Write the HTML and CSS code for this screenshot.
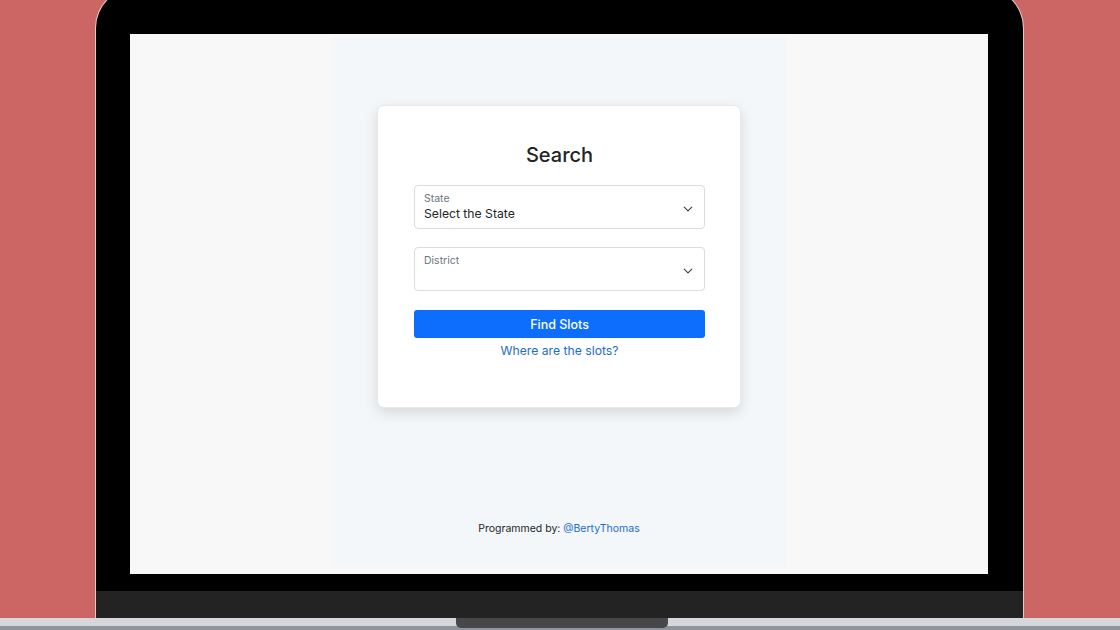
FILE: index.html
```html
<!DOCTYPE html>
<html>
<head>
<meta charset="utf-8">
<link rel="stylesheet" href="styles.css">
</head>
<body>
<div class="stage">
  <div class="lid">
    <div class="bezel">
      <div class="screen">
        <div class="column">
          <div class="card">
            <h1 class="title">Search</h1>
            <div class="select">
              <div class="select-text">
                <span class="select-label">State</span>
                <span class="select-value">Select the State</span>
              </div>
              <svg class="chev" width="10" height="6" viewBox="0 0 10 6"><path d="M1.2 1.2l3.8 3.6 3.8-3.6" fill="none" stroke="#343a40" stroke-width="1.1" stroke-linecap="round" stroke-linejoin="round"/></svg>
            </div>
            <div class="select">
              <div class="select-text">
                <span class="select-label">District</span>
                <span class="select-value">&nbsp;</span>
              </div>
              <svg class="chev" width="10" height="6" viewBox="0 0 10 6"><path d="M1.2 1.2l3.8 3.6 3.8-3.6" fill="none" stroke="#343a40" stroke-width="1.1" stroke-linecap="round" stroke-linejoin="round"/></svg>
            </div>
            <button class="btn">Find Slots</button>
            <a class="where">Where are the slots?</a>
          </div>
          <div class="footer">Programmed by: <a class="handle">@BertyThomas</a></div>
        </div>
      </div>
    </div>
    <div class="hinge"></div>
  </div>
  <div class="base"><div class="notch"></div></div>
</div>
</body>
</html>
```
FILE: styles.css
```css
html, body {
  margin: 0;
  padding: 0;
}
body {
  font-family: Inter, "Noto Sans", "Liberation Sans", sans-serif;
  color: #212529;
}
.stage {
  width: 1120px;
  height: 630px;
  background: #cb6664;
  overflow: hidden;
  display: flex;
  flex-direction: column;
  align-items: center;
}
.lid {
  width: 927px;
  height: 630px;
  margin-top: -12px;
  margin-left: -1px;
  background: #000;
  border-radius: 40px 40px 0 0;
  box-shadow: 0 0 0 1px #e9c6c4;
  display: flex;
  flex-direction: column;
  flex: none;
}
.bezel {
  padding: 46px 35px 17px 34px;
}
.screen {
  height: 540px;
  background: #f8f8f8;
  display: flex;
  justify-content: center;
}
.column {
  width: 455px;
  margin-top: 3px;
  margin-bottom: 7px;
  background: #f4f7fa;
  display: flex;
  flex-direction: column;
  align-items: center;
  padding-top: 68px;
  box-sizing: border-box;
}
.card {
  width: 364px;
  box-sizing: border-box;
  background: #fff;
  border: 1px solid #e6e8eb;
  border-radius: 7px;
  box-shadow: 0 5px 14px rgba(0, 0, 0, 0.12);
  padding: 37px 35px 48px 36px;
  display: flex;
  flex-direction: column;
  align-items: stretch;
}
.title {
  margin: 0 0 18px;
  font-size: 20px;
  line-height: 24px;
  font-weight: 500;
  text-align: center;
  color: #212529;
}
.select {
  height: 44px;
  box-sizing: border-box;
  border: 1px solid #d9dde1;
  border-radius: 4px;
  padding: 6px 11px 0 9px;
  display: flex;
  align-items: flex-start;
  justify-content: space-between;
  margin-bottom: 18px;
}
.select + .select {
  margin-bottom: 19px;
}
.select-text {
  display: flex;
  flex-direction: column;
}
.select-label {
  font-size: 10.5px;
  line-height: 13px;
  color: #6c757d;
}
.select-value {
  font-size: 12.2px;
  line-height: 17px;
  color: #212529;
}
.chev {
  margin-top: 14px;
}
.btn {
  height: 28px;
  border: none;
  border-radius: 3px;
  background: #0d6efd;
  color: #fff;
  font-family: inherit;
  font-size: 12.5px;
  font-weight: 500;
  padding: 0;
}
.where {
  margin-top: 5px;
  text-align: center;
  font-size: 12.2px;
  line-height: 16px;
  color: #1c6ccc;
}
.footer {
  margin-top: auto;
  margin-bottom: 30px;
  font-size: 10.5px;
  line-height: 16px;
  color: #212529;
}
.handle {
  color: #1c6ccc;
}
.hinge {
  height: 27px;
  background: #232323;
}
.base {
  flex: none;
  width: 1120px;
  height: 12px;
  background: linear-gradient(#d5d7da 0, #d5d7da 8px, #8e959c 8px);
  display: flex;
  justify-content: center;
}
.notch {
  width: 212px;
  height: 10px;
  margin-left: 4px;
  background: #464749;
  border-radius: 0 0 5px 5px;
}
```
